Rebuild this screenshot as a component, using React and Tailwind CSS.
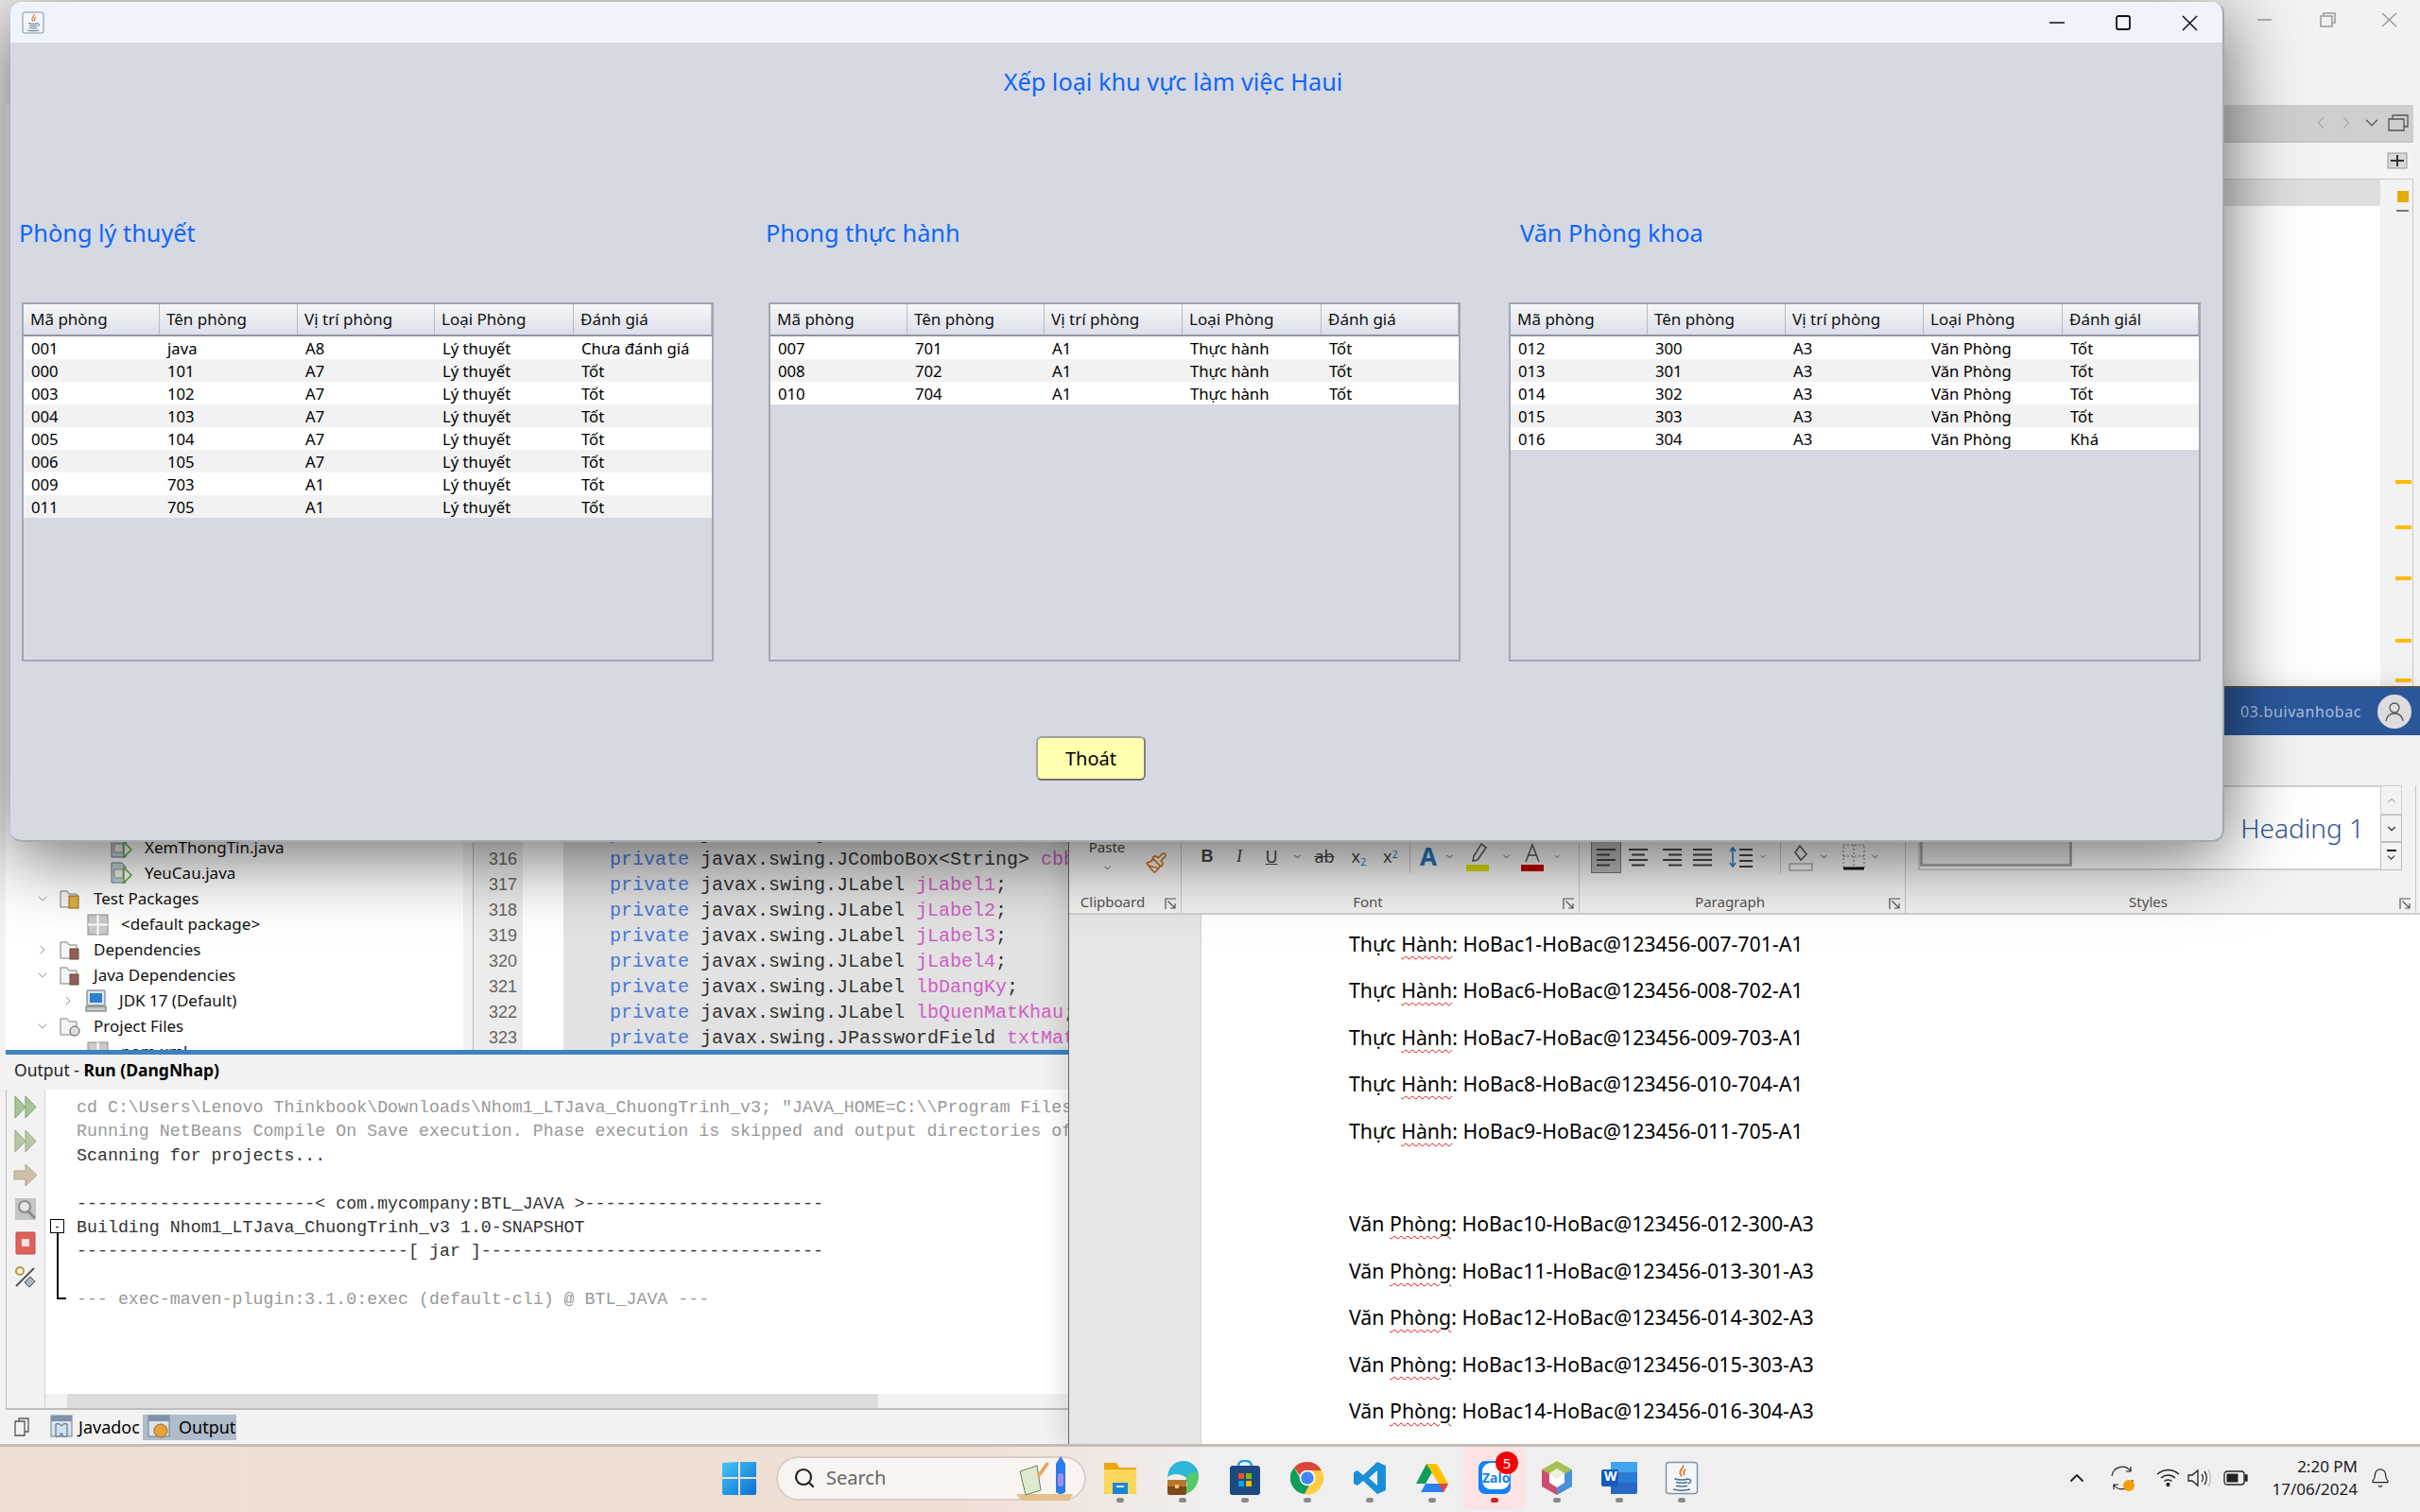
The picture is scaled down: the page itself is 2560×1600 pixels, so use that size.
import React from "react";
import { ChevronDown, ChevronRight, ChevronUp, ChevronLeft, Bell, Search, Paintbrush } from "lucide-react";

const SANS = "font-['Noto_Sans',sans-serif]";
const MONO = "font-['Liberation_Mono',monospace]";

const theory = [
  ["001", "java", "A8", "Lý thuyết", "Chưa đánh giá"],
  ["000", "101", "A7", "Lý thuyết", "Tốt"],
  ["003", "102", "A7", "Lý thuyết", "Tốt"],
  ["004", "103", "A7", "Lý thuyết", "Tốt"],
  ["005", "104", "A7", "Lý thuyết", "Tốt"],
  ["006", "105", "A7", "Lý thuyết", "Tốt"],
  ["009", "703", "A1", "Lý thuyết", "Tốt"],
  ["011", "705", "A1", "Lý thuyết", "Tốt"],
];
const practice = [
  ["007", "701", "A1", "Thực hành", "Tốt"],
  ["008", "702", "A1", "Thực hành", "Tốt"],
  ["010", "704", "A1", "Thực hành", "Tốt"],
];
const office = [
  ["012", "300", "A3", "Văn Phòng", "Tốt"],
  ["013", "301", "A3", "Văn Phòng", "Tốt"],
  ["014", "302", "A3", "Văn Phòng", "Tốt"],
  ["015", "303", "A3", "Văn Phòng", "Tốt"],
  ["016", "304", "A3", "Văn Phòng", "Khá"],
];
const headers = ["Mã phòng", "Tên phòng", "Vị trí phòng", "Loại Phòng", "Đánh giá"];

const JavaLogo = ({ size = 24 }) => (
  <svg width={size} height={size} viewBox="0 0 24 24">
    <rect x="1" y="1" width="22" height="22" rx="2" fill="#f3f6f9" stroke="#7f93a8" />
    <path d="M13 3c1 2-3 3-2 6 .3 1 1 1.500 1 2M15 6c-2 1-2 2-1 4" fill="none" stroke="#e0762b" strokeWidth="1.200" />
    <path d="M7 12.500c2 1 8 1 10 0M8 15c2 .7 6 .7 8 0M8 17.500c2 .7 6 .7 8 0M6 20c3 1 9 1 12 0M17 13c2 0 2 2-.5 3" fill="none" stroke="#50708f" strokeWidth="1" />
  </svg>
);

const RoomTable = ({ rows, lastHeader, cols }) => (
  <div className="h-[380px] border-2 border-[#a1a6b1] flex flex-col">
    <div className={`grid ${cols} h-[34px] border-b-2 border-[#8f95a3] bg-gradient-to-b from-[#f6f7fa] to-[#dcdfe8]`}>
      {headers.map((h, i) => (
        <div key={h} className="pl-[7px] flex items-center border-r border-[#b6bac4] text-[17px] text-[#111] whitespace-nowrap">
          {i === 4 && lastHeader ? lastHeader : h}
        </div>
      ))}
    </div>
    {rows.map((r, i) => (
      <div key={r[0]} className={`grid ${cols} h-6 shrink-0 ${i % 2 ? "bg-[#f2f2f2]" : "bg-white"}`}>
        {r.map((c, j) => (
          <div key={j} className="pl-2 pb-[2px] flex items-center text-[16.7px] text-black whitespace-nowrap">{c}</div>
        ))}
      </div>
    ))}
  </div>
);

const AppWindow = () => (
  <div className={`absolute left-[11px] top-[2px] w-[2342px] h-[889px] rounded-xl overflow-hidden flex flex-col bg-[#d6d9e2] border-r-2 border-b-2 border-[#a6a8ad] ${SANS}`}>
    <div className="h-[43px] shrink-0 bg-[#eff3fa] flex items-center justify-between pl-3">
      <JavaLogo />
      <div className="flex items-center">
        <svg width="70" height="20" viewBox="0 0 70 20"><path d="M27 10h16" stroke="#111" strokeWidth="1.500" /></svg>
        <svg width="70" height="20" viewBox="0 0 70 20"><rect x="28" y="3" width="14" height="14" rx="2" fill="none" stroke="#111" strokeWidth="1.800" /></svg>
        <svg width="70" height="20" viewBox="0 0 70 20"><path d="M28 3l15 15M43 3L28 18" stroke="#111" strokeWidth="1.500" /></svg>
      </div>
    </div>
    <div className="pt-[26px] pl-[120px] text-center h-[56px] text-[25.3px] leading-[30px] text-[#0f66fb]">Xếp loại khu vực làm việc Haui</div>
    <div className="mt-[127px] flex items-start pl-[12px]">
      <div className="w-[732px]">
        <div className="-ml-[3px] h-9 mb-[56px] text-[25.3px] leading-9 text-[#0f66fb]">Phòng lý thuyết</div>
        <RoomTable rows={theory} cols="grid-cols-[144px_146px_145px_147px_1fr]" />
      </div>
      <div className="w-[732px] ml-[58px]">
        <div className="-ml-[3px] h-9 mb-[56px] text-[25.3px] leading-9 text-[#0f66fb]">Phong thực hành</div>
        <RoomTable rows={practice} cols="grid-cols-[145px_145px_146px_147px_1fr]" />
      </div>
      <div className="w-[732px] ml-[51px]">
        <div className="ml-3 h-9 mb-[56px] text-[25.3px] leading-9 text-[#0f66fb]">Văn Phòng khoa</div>
        <RoomTable rows={office} lastHeader="Đánh giál" cols="grid-cols-[145px_146px_146px_147px_1fr]" />
      </div>
    </div>
    <button className="mt-[79px] ml-[1085px] w-[116px] h-[47px] rounded-md bg-[#ffffb0] border-2 border-[#a0a0a0] border-b-[#707070] border-r-[#808080] text-[20px] text-black">Thoát</button>
  </div>
);

const FileIcon = () => (
  <svg width="23" height="24" viewBox="0 0 23 24">
    <path d="M1 1h11l4 4v17H1z" fill="#c4d0dc" stroke="#66788a" />
    <rect x="4" y="8" width="9" height="9" fill="#eef3e6" stroke="#8a9a8a" />
    <path d="M14 6l8 8-8 8z" fill="#fff" stroke="#62a83c" strokeWidth="1.500" />
  </svg>
);
const FolderIcon = ({ badge }) => (
  <svg width="23" height="24" viewBox="0 0 23 24">
    <path d="M1 4h7l2 3h8v14H1z" fill="#f4f4f4" stroke="#7d7d7d" />
    {badge === "test" && <rect x="10" y="9" width="10" height="13" fill="#e0b040" stroke="#8a6a20" />}
    {badge === "dep" && <rect x="11" y="11" width="9" height="11" fill="#9c5a5a" stroke="#553" />}
    {badge === "proj" && <circle cx="16" cy="17" r="5" fill="#ddd" stroke="#555" />}
  </svg>
);
const PackageIcon = () => (
  <svg width="23" height="24" viewBox="0 0 23 24">
    <rect x="1" y="2" width="21" height="21" fill="#c9c9c9" stroke="#8a8a8a" />
    <path d="M11.500 2v21M1 12.500h21" stroke="#fff" strokeWidth="2" />
  </svg>
);
const JdkIcon = () => (
  <svg width="23" height="24" viewBox="0 0 23 24">
    <rect x="2" y="1" width="19" height="16" rx="1" fill="#dfe6ee" stroke="#5a6a7a" />
    <rect x="5" y="4" width="13" height="10" fill="#2f7fcf" />
    <rect x="1" y="18" width="21" height="5" fill="#c9c9c9" stroke="#6a6a6a" />
  </svg>
);

const treeRows = [
  { label: "XemThongTin.java", pad: "pl-[111px]", icon: <FileIcon /> },
  { label: "YeuCau.java", pad: "pl-[111px]", icon: <FileIcon /> },
  { label: "Test Packages", pad: "pl-[31px]", open: true, icon: <FolderIcon badge="test" /> },
  { label: "<default package>", pad: "pl-[86px]", icon: <PackageIcon /> },
  { label: "Dependencies", pad: "pl-[31px]", closed: true, icon: <FolderIcon badge="dep" /> },
  { label: "Java Dependencies", pad: "pl-[31px]", open: true, icon: <FolderIcon badge="dep" /> },
  { label: "JDK 17 (Default)", pad: "pl-[58px]", closed: true, icon: <JdkIcon /> },
  { label: "Project Files", pad: "pl-[31px]", open: true, icon: <FolderIcon badge="proj" /> },
  { label: "pom.xml", pad: "pl-[86px]", icon: <PackageIcon /> },
];

const codeRows = [
  ["315", "javax.swing.JButton ", "btnThoat;"],
  ["316", "javax.swing.JComboBox<String> ", "cbbVaiTro;"],
  ["317", "javax.swing.JLabel ", "jLabel1", ";"],
  ["318", "javax.swing.JLabel ", "jLabel2", ";"],
  ["319", "javax.swing.JLabel ", "jLabel3", ";"],
  ["320", "javax.swing.JLabel ", "jLabel4", ";"],
  ["321", "javax.swing.JLabel ", "lbDangKy", ";"],
  ["322", "javax.swing.JLabel ", "lbQuenMatKhau", ";"],
  ["323", "javax.swing.JPasswordField ", "txtMatKhau", ";"],
];

const outputLines = [
  ["text-[#999]", 'cd C:\\Users\\Lenovo Thinkbook\\Downloads\\Nhom1_LTJava_ChuongTrinh_v3; "JAVA_HOME=C:\\\\Program Files'],
  ["text-[#999]", "Running NetBeans Compile On Save execution. Phase execution is skipped and output directories of"],
  ["text-[#333]", "Scanning for projects..."],
  ["text-[#333]", " "],
  ["text-[#333]", "-----------------------< com.mycompany:BTL_JAVA >-----------------------"],
  ["text-[#333]", "Building Nhom1_LTJava_ChuongTrinh_v3 1.0-SNAPSHOT"],
  ["text-[#333]", "--------------------------------[ jar ]---------------------------------"],
  ["text-[#333]", " "],
  ["text-[#999]", "--- exec-maven-plugin:3.1.0:exec (default-cli) @ BTL_JAVA ---"],
];

const RailIcons = () => (
  <div className="w-[41px] shrink-0 bg-[#f2f2f2] border-r border-[#d0d0d0] flex flex-col items-center pt-[6px] gap-[11px]">
    <svg width="26" height="25" viewBox="0 0 26 25"><path d="M2 1l11 11.500L2 24zM13 1l11 11.500L13 24z" fill="#a9c49a" stroke="#7c9f6c" /></svg>
    <svg width="26" height="25" viewBox="0 0 26 25"><path d="M2 1l11 11.500L2 24zM13 1l11 11.500L13 24z" fill="#b8c8a6" stroke="#98a888" /></svg>
    <svg width="26" height="25" viewBox="0 0 26 25"><path d="M1 8h12V1l12 11.500L13 24v-7H1z" fill="#cdbfa8" stroke="#b0a48e" /></svg>
    <svg width="26" height="25" viewBox="0 0 26 25"><rect x="2" y="1" width="22" height="23" fill="#c4c4c4" /><circle cx="12" cy="10" r="6" fill="#e4e4e4" stroke="#8a8a8a" strokeWidth="2" /><path d="M16 15l7 7" stroke="#8a8a8a" strokeWidth="3" /></svg>
    <svg width="26" height="25" viewBox="0 0 26 25"><rect x="3" y="1" width="20" height="23" rx="1" fill="#e2605c" stroke="#c04844" /><rect x="9" y="8" width="8" height="8" fill="#fbe5e4" /></svg>
    <svg width="26" height="25" viewBox="0 0 26 25"><circle cx="7" cy="6" r="4" fill="none" stroke="#b89a30" strokeWidth="2" /><path d="M3 22L22 3" stroke="#555" strokeWidth="2" /><path d="M12 18l6-6 5 5-6 6z" fill="#aab4be" stroke="#444" /></svg>
  </div>
);

const TabGlyph = ({ book }) => (
  <svg width="26" height="26" viewBox="0 0 26 26">
    <rect x="1" y="1" width="22" height="22" fill="#dbe2ea" stroke="#6f8194" />
    <rect x="1" y="1" width="22" height="6" fill="#7d93a8" />
    {book ? <path d="M6 10c3-1 5 0 6 2 1-2 3-3 6-2v13h-5v-3h-2v3H6z" fill="#cfe0ee" stroke="#44617c" /> : <circle cx="14" cy="17" r="7" fill="#e5a33c" stroke="#9a6a1c" />}
  </svg>
);

const NetBeans = () => (
  <div className={`absolute left-0 top-0 w-[2560px] h-[1528px] flex flex-col bg-[#f2f2f2] ${SANS}`}>
    <div className="h-[111px] shrink-0 flex justify-end items-start pt-[12px] text-[#8a8a8a]">
      <svg width="66" height="18" viewBox="0 0 66 18"><path d="M26 9h15" stroke="#999" strokeWidth="1.500" /></svg>
      <svg width="66" height="18" viewBox="0 0 66 18"><path d="M27 5h12v11H27zM30 5V2h12v10h-3" fill="none" stroke="#999" strokeWidth="1.500" /></svg>
      <svg width="66" height="18" viewBox="0 0 66 18"><path d="M26 2l15 14M41 2L26 16" stroke="#999" strokeWidth="1.500" /></svg>
    </div>
    <div className="flex-1 flex flex-col pl-[6px] pr-[7px] min-h-0">
      <div className="h-[1000px] shrink-0 flex">
        <div className="w-[484px] shrink-0 bg-white overflow-hidden flex flex-col justify-end">
          <div className="-mb-[15px]">
            {treeRows.map((r) => (
              <div key={r.label} className={`h-[27px] flex items-center ${r.pad}`}>
                {r.open && <ChevronDown size={16} strokeWidth={1.2} className="text-[#777] mr-[10px]" />}
                {r.closed && <ChevronRight size={16} strokeWidth={1.2} className="text-[#777] mr-[10px]" />}
                {r.icon}
                <span className="ml-[13px] text-[17px] text-[#111]">{r.label}</span>
              </div>
            ))}
          </div>
        </div>
        <div className="w-[10px] shrink-0 bg-[#f2f2f2]" />
        <div className="flex-1 flex flex-col min-w-0">
          <div className="h-10 shrink-0 bg-[#cfcfcf] border-b-2 border-[#c4c4c4] flex items-center justify-end gap-[5px] pr-[4px] text-[#aaa]">
            <ChevronLeft size={22} strokeWidth={1.2} />
            <ChevronRight size={22} strokeWidth={1.2} />
            <ChevronDown size={22} strokeWidth={1.4} className="text-[#555]" />
            <svg width="24" height="20" viewBox="0 0 24 20"><path d="M2 6h16v12H2zM6 6V2h16v12h-4" fill="none" stroke="#555" strokeWidth="1.300" /></svg>
          </div>
          <div className="h-[39px] shrink-0 bg-[#f3f3f3] border-b border-[#c9c9c9] flex items-center justify-end pr-[6px]">
            <svg width="22" height="18" viewBox="0 0 22 18"><rect x="1" y="1" width="20" height="16" fill="#d8d8d8" stroke="#999" /><path d="M11 3v12M4 9h14" stroke="#333" strokeWidth="2" /></svg>
          </div>
          <div className="flex-1 flex min-h-0">
            <div className="flex-1 min-w-0 bg-white flex flex-col justify-between overflow-hidden">
              <div className="h-7 bg-[#dedede]" />
              <div>
                {codeRows.map(([no, type, name, tail]) => (
                  <div key={no} className="h-[27px] flex">
                    <div className="w-[53px] shrink-0 bg-[#ececec] border-l border-[#bbb] pr-[6px] text-right text-[18px] leading-[29px] text-[#666] font-['Liberation_Sans',sans-serif]">{no}</div>
                    <div className="w-[43px] shrink-0" />
                    <div className={`flex-1 bg-[#e2e2e2] pl-[49px] text-[20px] leading-[29px] whitespace-pre ${MONO}`}>
                      <span className="text-[#4a78d8]">private </span>
                      <span className="text-[#333]">{type}</span>
                      <span className="text-[#cf5fc4]">{name}</span>
                      <span className="text-[#333]">{tail}</span>
                    </div>
                  </div>
                ))}
              </div>
            </div>
            <div className="w-[35px] shrink-0 bg-[#f2f2f2] border-r border-[#c8c8c8] flex flex-col items-end pr-[1px]">
              <div className="mt-3 mr-[3px] w-3 h-3 bg-[#e5ac00]" />
              <div className="mt-[8px] mr-[3px] w-[13px] h-[2px] bg-[#777]" />
              <div className="mt-[284px] w-[17px] h-1 bg-[#ffb900]" />
              <div className="mt-[44px] w-[17px] h-1 bg-[#ffb900]" />
              <div className="mt-[50px] w-[17px] h-1 bg-[#ffb900]" />
              <div className="mt-[62px] w-[17px] h-1 bg-[#ffb900]" />
              <div className="mt-[38px] w-[17px] h-1 bg-[#ffb900]" />
            </div>
          </div>
        </div>
      </div>
      <div className="h-[5px] shrink-0 bg-[#3f81c4]" />
      <div className="h-[37px] shrink-0 flex items-center pl-[9px] pb-[4px] text-[17.5px] text-[#222] whitespace-pre">
        Output - <span className="font-bold text-black">Run (DangNhap)</span>
      </div>
      <div className="h-[339px] shrink-0 flex border-l border-b-2 border-[#bdbdbd]">
        <RailIcons />
        <div className="flex-1 min-w-0 bg-white flex flex-col relative">
          <div className={`flex-1 pt-[7px] pl-[33px] text-[18.3px] leading-[25.4px] whitespace-pre overflow-hidden ${MONO}`}>
            {outputLines.map(([color, text], i) => (
              <div key={i} className={`h-[25.4px] ${color}`}>{text}</div>
            ))}
          </div>
          <div className="absolute left-[5px] top-[137px] w-[15px] h-[15px] border border-black bg-white flex items-center justify-center text-[12px] leading-none">-</div>
          <div className="absolute left-[12px] top-[152px] w-[10px] h-[70px] border-l-2 border-b-2 border-black" />
          <div className="h-[15px] shrink-0 bg-[#f2f2f2] pl-[23px]">
            <div className="w-[858px] h-full bg-[#dcdcdc]" />
          </div>
        </div>
      </div>
      <div className="flex-1 flex items-center pl-[8px]">
        <svg width="20" height="24" viewBox="0 0 20 24"><path d="M2 6h10v15H2zM6 6V3h10v14h-4" fill="none" stroke="#555" strokeWidth="1.300" /></svg>
        <div className="ml-[19px] h-[27px] w-[98px] flex items-center text-[18px] text-black"><TabGlyph book /><span className="ml-[4px]">Javadoc</span></div>
        <div className="h-[27px] w-[99px] flex items-center bg-[#b0bcc9] pl-[5px] text-[18px] text-black"><TabGlyph /><span className="ml-[7px]">Output</span></div>
      </div>
    </div>
  </div>
);

const AlignIcon = ({ kind, active }) => {
  const rows = { left: [[2, 22], [2, 16], [2, 22], [2, 16]], center: [[2, 22], [5, 19], [2, 22], [5, 19]], right: [[2, 22], [8, 22], [2, 22], [8, 22]], justify: [[2, 22], [2, 22], [2, 22], [2, 22]] }[kind];
  return (
    <div className={`w-[32px] h-[35px] flex items-center justify-center ${active ? "bg-[#b8b8b8] border border-[#777]" : ""}`}>
      <svg width="24" height="22" viewBox="0 0 24 22">
        {rows.map(([a, b], i) => <path key={i} d={`M${a} ${3 + i * 5.500}H${b}`} stroke="#444" strokeWidth="2" />)}
      </svg>
    </div>
  );
};

const Caret = ({ w = "w-5" }) => (
  <div className={`${w} h-[35px] flex items-center justify-center`}><ChevronDown size={11} strokeWidth={2} className="text-[#444]" /></div>
);

const Launcher = () => (
  <svg className="absolute right-[4px] bottom-[3px]" width="13" height="13" viewBox="0 0 13 13"><path d="M1 12V1h11M3.500 3.500l7 7M11 6v5H6" fill="none" stroke="#555" strokeWidth="1.200" /></svg>
);

const Group = ({ width, label, children }) => (
  <div className={`${width} shrink-0 h-full flex flex-col relative border-r border-[#c8c6c4]`}>
    <div className="flex-1 min-h-0 overflow-hidden">{children}</div>
    <div className="h-[23px] pr-[26px] text-center text-[15px] leading-[22px] text-[#555]">{label}</div>
    <Launcher />
  </div>
);

const Tool = ({ w, children }) => (
  <div className={`${w} h-[35px] flex items-center justify-center text-[#444] text-[18px]`}>{children}</div>
);

const docLines = [
  ["Thực ", "Hành", ": HoBac1-HoBac@123456-007-701-A1"],
  ["Thực ", "Hành", ": HoBac6-HoBac@123456-008-702-A1"],
  ["Thực ", "Hành", ": HoBac7-HoBac@123456-009-703-A1"],
  ["Thực ", "Hành", ": HoBac8-HoBac@123456-010-704-A1"],
  ["Thực ", "Hành", ": HoBac9-HoBac@123456-011-705-A1"],
  null,
  ["Văn ", "Phòng", ": HoBac10-HoBac@123456-012-300-A3"],
  ["Văn ", "Phòng", ": HoBac11-HoBac@123456-013-301-A3"],
  ["Văn ", "Phòng", ": HoBac12-HoBac@123456-014-302-A3"],
  ["Văn ", "Phòng", ": HoBac13-HoBac@123456-015-303-A3"],
  ["Văn ", "Phòng", ": HoBac14-HoBac@123456-016-304-A3"],
];

const Word = () => (
  <div className={`absolute left-[1130px] top-[726px] right-0 bottom-[72px] flex flex-col bg-white border-l border-[#666] ${SANS} shadow-[-6px_0_24px_rgba(0,0,0,0.12)]`}>
    <div className="h-[52px] shrink-0 bg-[#2b579a] border-t-2 border-[#555] flex items-center justify-end pr-[9px]">
      <span className="text-[16px] tracking-[0.6px] text-[#a9bfdd] mr-[17px]">03.buivanhobac</span>
      <div className="w-9 h-9 rounded-full bg-[#dcdcdc] flex items-center justify-center">
        <svg width="24" height="24" viewBox="0 0 24 24" fill="none" stroke="#555" strokeWidth="1.300"><circle cx="12" cy="8" r="5" /><path d="M3 22c1-6 5-8 9-8s8 2 9 8" /></svg>
      </div>
    </div>
    <div className="h-[190px] shrink-0 bg-[#f3f2f1] border-b-2 border-[#d2d0ce] flex flex-col justify-end">
      <div className="h-[135px] flex">
        <Group width="w-[119px]" label="Clipboard">
          <div className="flex pt-[54px]">
            <div className="w-[80px] flex flex-col items-center text-[15px] leading-[22px] text-[#444]">
              Paste
              <ChevronDown size={11} strokeWidth={2} className="mt-[6px] text-[#444]" />
            </div>
            <Paintbrush size={24} strokeWidth={1.5} className="mt-[16px] text-[#c9701a]" />
          </div>
        </Group>
        <Group width="w-[421px]" label="Font">
          <div className="flex pt-[58px] pl-[10px] items-center">
            <Tool w="w-[34px]"><b className="font-['Liberation_Sans',sans-serif]">B</b></Tool>
            <Tool w="w-[34px]"><i className="font-['Liberation_Serif',serif]">I</i></Tool>
            <Tool w="w-[34px]"><u>U</u></Tool>
            <Caret />
            <Tool w="w-[38px]"><s>ab</s></Tool>
            <Tool w="w-[35px]"><span>x<sub className="text-[#2a7ab8] text-[11px]">2</sub></span></Tool>
            <Tool w="w-[32px]"><span>x<sup className="text-[#2a7ab8] text-[11px]">2</sup></span></Tool>
            <div className="w-[8px] h-[35px] flex justify-center"><div className="w-px h-full bg-[#c8c6c4]" /></div>
            <Tool w="w-[32px]"><span className="text-[26px] font-bold text-[#2a72b5]">A</span></Tool>
            <Caret w="w-[12px]" />
            <Tool w="w-[48px]">
              <svg width="28" height="32" viewBox="0 0 28 32"><path d="M18 2l5 4-9 13-5 1 1-5z" fill="none" stroke="#555" strokeWidth="1.500" /><rect x="2" y="24" width="24" height="7" fill="#d8d800" /></svg>
            </Tool>
            <Caret w="w-[12px]" />
            <Tool w="w-[44px]">
              <svg width="28" height="32" viewBox="0 0 28 32"><path d="M7 21l7-18 7 18M10 14h8" fill="none" stroke="#555" strokeWidth="1.500" /><rect x="2" y="24" width="24" height="7" fill="#c00000" /></svg>
            </Tool>
            <Caret w="w-[8px]" />
          </div>
        </Group>
        <Group width="w-[345px]" label="Paragraph">
          <div className="flex pt-[58px] pl-[12px] items-center">
            <AlignIcon kind="left" active />
            <div className="w-[2px]" />
            <AlignIcon kind="center" />
            <div className="w-[4px]" />
            <AlignIcon kind="right" />
            <AlignIcon kind="justify" />
            <Tool w="w-[38px] ml-[6px]">
              <svg width="28" height="26" viewBox="0 0 28 26"><path d="M5 3v20M2 7l3-4 3 4M2 19l3 4 3-4" fill="none" stroke="#1c7cc4" strokeWidth="1.500" /><path d="M12 5h14M12 11h14M12 17h14M12 23h14" stroke="#444" strokeWidth="2" /></svg>
            </Tool>
            <Caret w="w-[8px]" />
            <div className="w-[28px] h-[35px] flex justify-center"><div className="w-px h-full bg-[#c8c6c4]" /></div>
            <Tool w="w-[30px] -ml-[8px]">
              <svg width="28" height="30" viewBox="0 0 28 30"><path d="M14 3l7 9-6 6-6-8z" fill="none" stroke="#555" strokeWidth="1.500" /><rect x="3" y="22" width="24" height="7" fill="#f3f2f1" stroke="#888" /></svg>
            </Tool>
            <Caret w="w-[20px]" />
            <Tool w="w-[32px] ml-[6px]">
              <svg width="26" height="30" viewBox="0 0 26 30"><rect x="2" y="2" width="22" height="24" fill="none" stroke="#777" strokeDasharray="2 2" /><path d="M13 2v24M2 14h22" stroke="#777" strokeDasharray="2 2" /><path d="M2 27h22" stroke="#111" strokeWidth="3" /></svg>
            </Tool>
            <Caret w="w-[12px]" />
          </div>
        </Group>
        <Group width="w-[540px]" label="Styles">
          <div className="flex pl-[13px]">
            <div className="w-[489px] h-[90px] bg-white border-y-2 border-l-2 border-[#d0d0d0] flex justify-between">
              <div className="w-[161px] h-[84px] border-[3px] border-[#a9a9a9] bg-[#ececec]" />
              <span className="text-[28px] leading-[86px] font-light text-[#2f5496] mr-[17px]">Heading 1</span>
            </div>
            <div className="w-[23px] h-[90px] flex flex-col text-[#333]">
              <div className="h-[31px] border border-[#d0d0d0] flex items-center justify-center"><ChevronUp size={14} className="text-[#bbb]" /></div>
              <div className="h-[29px] border border-[#bbb] flex items-center justify-center"><ChevronDown size={14} /></div>
              <div className="h-[30px] border border-[#bbb] flex flex-col items-center justify-center"><div className="w-[10px] h-[2px] bg-[#222]" /><ChevronDown size={13} /></div>
            </div>
          </div>
        </Group>
      </div>
    </div>
    <div className="flex-1 flex min-h-0">
      <div className="w-[140px] shrink-0 bg-[#e6e6e6] border-r border-[#cfcfcf]" />
      <div className="flex-1 pl-[156px] pt-[6px] text-[21.3px] text-black">
        {docLines.map((l, i) => (
          <div key={i} className="h-[49.4px] leading-[49px] whitespace-pre">
            {l && <>{l[0]}<span className="underline decoration-wavy decoration-[#e01010] decoration-1 underline-offset-4">{l[1]}</span>{l[2]}</>}
          </div>
        ))}
      </div>
    </div>
  </div>
);

const Dot = ({ red }) => (
  <div className={`absolute bottom-[7px] left-1/2 -translate-x-1/2 w-2 h-[5px] rounded-full ${red ? "bg-[#d02020]" : "bg-[#8a8a8a]"}`} />
);

const TaskItem = ({ children, red, tint }) => (
  <div className={`relative w-[66px] h-full flex items-center justify-center ${tint ? "bg-[#fde3e3] rounded-lg" : ""}`}>
    {children}
    <Dot red={red} />
  </div>
);

const Taskbar = () => (
  <div className={`absolute left-0 right-0 bottom-0 h-[72px] flex items-center justify-between border-t-[3px] border-[#c2bcb8] bg-gradient-to-r from-[#f0dfd5] from-40% to-[#f0efef] to-[50%] ${SANS}`}>
    <div className="flex items-center h-full pl-[764px] pb-[3px]">
      <svg width="36" height="36" viewBox="0 0 36 36">
        <defs><linearGradient id="win" x1="0" y1="0" x2="1" y2="1"><stop offset="0" stopColor="#45c6f8" /><stop offset="1" stopColor="#0a6fd0" /></linearGradient></defs>
        <path d="M0 2l17-1v16H0zM19 1h17v16H19zM0 19h17v17H2a2 2 0 0 1-2-2zM19 19h17v15a2 2 0 0 1-2 2H19z" fill="url(#win)" />
      </svg>
      <div className="ml-[21px] mr-[3px] w-[328px] h-[47px] rounded-full bg-[#f9f4f1] border-2 border-[#d9cec8] flex items-center pl-[16px] pr-[6px]">
        <Search size={24} strokeWidth={2.2} className="text-[#222]" />
        <span className="ml-[11px] text-[20px] text-[#666]">Search</span>
        <svg className="ml-auto" width="68" height="50" viewBox="0 0 68 50">
          <path d="M2 42h60l-4 7H8z" fill="#e3c08c" />
          <path d="M6 18l18-6 4 26-16 5z" fill="#dfe9cf" stroke="#5f8a50" />
          <path d="M24 22l10-14 3 2-10 14z" fill="#f0a060" />
          <path d="M44 10l5-8 5 8v30q-5 4-10 0z" fill="#2b7bea" />
          <rect x="46" y="20" width="6" height="14" rx="3" fill="#a58be8" />
        </svg>
      </div>
      <TaskItem>
        <svg width="36" height="38" viewBox="0 0 36 38"><path d="M1 3h13l3 5h18v28H1z" fill="#e8a80c" /><path d="M1 10h34v24a2 2 0 0 1-2 2H3a2 2 0 0 1-2-2z" fill="#fdd65c" /><rect x="10" y="24" width="16" height="12" fill="#1a86d8" /><rect x="14" y="27" width="8" height="2" fill="#d3ecff" /></svg>
      </TaskItem>
      <TaskItem>
        <svg width="36" height="38" viewBox="0 0 36 38"><path d="M2 18C3 7 10 1 19 1c9 0 16 7 16 16 0 6-5 9-10 8-3-1-4-3-3-6-5-5-15-5-20-1z" fill="#2db7d8" /><path d="M22 19c1-7 13-7 13-2 0 10-8 19-16 19-2 0-2 0-3-1 5-1 8-6 6-16z" fill="#54c96a" /><rect x="2" y="21" width="20" height="16" rx="2" fill="#7a4a18" /><rect x="2" y="21" width="20" height="7" fill="#b8772a" /><rect x="10" y="26" width="4" height="4" fill="#f4c06a" /></svg>
      </TaskItem>
      <TaskItem>
        <svg width="34" height="38" viewBox="0 0 34 38"><path d="M10 6c0-7 14-7 14 0" fill="none" stroke="#18a0e0" strokeWidth="2.500" /><rect x="1" y="6" width="32" height="31" rx="3" fill="#1c4a80" /><rect x="10" y="14" width="6" height="6" fill="#f25022" /><rect x="18" y="14" width="6" height="6" fill="#7fba00" /><rect x="10" y="22" width="6" height="6" fill="#00a4ef" /><rect x="18" y="22" width="6" height="6" fill="#ffb900" /></svg>
      </TaskItem>
      <TaskItem>
        <svg width="36" height="36" viewBox="0 0 36 36"><path d="M18 1a17 17 0 0 1 15 9H18a8 8 0 0 0-8 5L4 7A17 17 0 0 1 18 1z" fill="#db4437" /><path d="M4 7l8 14a8 8 0 0 0 8 5l-5 9A17 17 0 0 1 4 7z" fill="#0f9d58" /><path d="M33 10a17 17 0 0 1-18 25l8-13a8 8 0 0 0 0-12z" fill="#ffcd40" /><circle cx="18" cy="18" r="7.500" fill="#4285f4" stroke="#fff" strokeWidth="1.500" /></svg>
      </TaskItem>
      <TaskItem>
        <svg width="36" height="36" viewBox="0 0 36 36"><path d="M26 1l9 4v26l-9 4-15-14-6 5-4-2V12l4-2 6 5zM26 10l-9 8 9 8z" fill="#1b8fd6" fillRule="evenodd" /></svg>
      </TaskItem>
      <TaskItem>
        <svg width="36" height="32" viewBox="0 0 36 32"><path d="M12 1h11L11 22H1z" fill="#0f9d58" /><path d="M12 1h11l12 21H25z" fill="#ffc107" /><path d="M11 22h24l-5 9H6z" fill="#2f7ff0" /><path d="M25 22h10l-5 9z" fill="#ea4335" /></svg>
      </TaskItem>
      <TaskItem red tint>
        <svg width="36" height="38" viewBox="0 0 36 38"><path d="M8 1h20a7 7 0 0 1 7 7v21a7 7 0 0 1-7 7H8a7 7 0 0 1-7-7V8a7 7 0 0 1 7-7z" fill="#1583f5" /><rect x="5" y="3" width="29" height="28" rx="9" fill="#fff" /></svg>
        <span className="absolute left-[20px] top-[26px] text-[14px] font-bold text-[#1583f5] leading-none">Zalo</span>
        <span className="absolute right-[8px] top-[5px] w-6 h-6 rounded-full bg-[#f40008] text-white text-[15px] leading-6 text-center">5</span>
      </TaskItem>
      <TaskItem>
        <svg width="34" height="38" viewBox="0 0 34 38"><path d="M17 1l16 9-16 9-16-9z" fill="#a8bf52" /><path d="M1 10l16 9v18L1 28z" fill="#cb4d6f" /><path d="M33 10L17 19v18l16-9z" fill="#4a90d9" /><path d="M17 9l8 5-8 5-8-5z" fill="#eef0dc" /><path d="M9 14l8 5v10l-8-5zM25 14l-8 5v10l8-5z" fill="#fff" /></svg>
      </TaskItem>
      <TaskItem>
        <svg width="38" height="36" viewBox="0 0 38 36"><path d="M10 1h26a2 2 0 0 1 2 2v30a2 2 0 0 1-2 2H10z" fill="#2a68c4" /><rect x="10" y="1" width="28" height="11" fill="#41a5ee" /><rect x="10" y="12" width="28" height="11" fill="#2b7cd3" /><rect x="0" y="9" width="18" height="18" rx="2" fill="#185abd" /></svg>
        <span className="absolute left-[17px] top-[24px] text-[14px] font-bold text-white leading-none">W</span>
      </TaskItem>
      <TaskItem><JavaLogo size={36} /></TaskItem>
    </div>
    <div className="flex items-center h-full pr-[28px] pb-[3px]">
      <div className="w-8 flex justify-center"><ChevronUp size={24} strokeWidth={1.800} className="text-[#222]" /></div>
      <div className="relative w-10 ml-3 flex justify-center">
        <svg width="26" height="26" viewBox="0 0 26 26" fill="none" stroke="#222" strokeWidth="1.200"><path d="M2 11a11 11 0 0 1 20-5M22 1v5h-5M24 15a11 11 0 0 1-20 5M4 25v-5h5" /></svg>
        <div className="absolute right-[7px] bottom-[-1px] w-3 h-3 rounded-full bg-[#f59c0a]" />
      </div>
      <div className="w-8 ml-3 flex justify-center">
        <svg width="25" height="20" viewBox="0 0 25 20" fill="none" stroke="#222" strokeWidth="1.300"><path d="M1 6c7-6 16-6 23 0M5 10c4-4 11-4 15 0M8.500 13.500c2-2 6-2 8 0" /><circle cx="12.500" cy="17" r="1.500" fill="#222" /></svg>
      </div>
      <div className="w-8 ml-[2px] flex justify-center">
        <svg width="26" height="22" viewBox="0 0 26 22" fill="none" stroke="#222" strokeWidth="1.300"><path d="M1 8h4l6-5v16l-6-5H1zM15 7c2 2 2 6 0 8M18 4c3 4 3 10 0 14" /><path d="M22 2c3 5 3 13 0 18" stroke="#bbb" /></svg>
      </div>
      <div className="w-8 ml-[6px] flex justify-center">
        <svg width="26" height="16" viewBox="0 0 26 16" fill="none" stroke="#222" strokeWidth="1.300"><rect x="1" y="1" width="21" height="14" rx="3" /><rect x="3.500" y="3.500" width="12" height="9" fill="#222" stroke="none" /><path d="M23 5h2v6h-2z" fill="#222" /></svg>
      </div>
      <div className="ml-[13px] w-[100px] flex flex-col items-end text-[17px] leading-[24px] text-[#1b1b1b]">
        <span>2:20 PM</span>
        <span>17/06/2024</span>
      </div>
      <div className="ml-[10px] w-7 flex justify-center"><Bell size={22} strokeWidth={1.300} className="text-[#222]" /></div>
    </div>
  </div>
);

export default function App() {
  return (
    <div className="relative w-[2560px] h-[1600px] overflow-hidden bg-[#f2f2f2]">
      <NetBeans />
      <Word />
      <div className="absolute left-[11px] top-[2px] w-[2342px] h-[889px] rounded-xl shadow-[0_14px_80px_rgba(0,0,0,0.6)]" />
      <AppWindow />
      <Taskbar />
    </div>
  );
}
